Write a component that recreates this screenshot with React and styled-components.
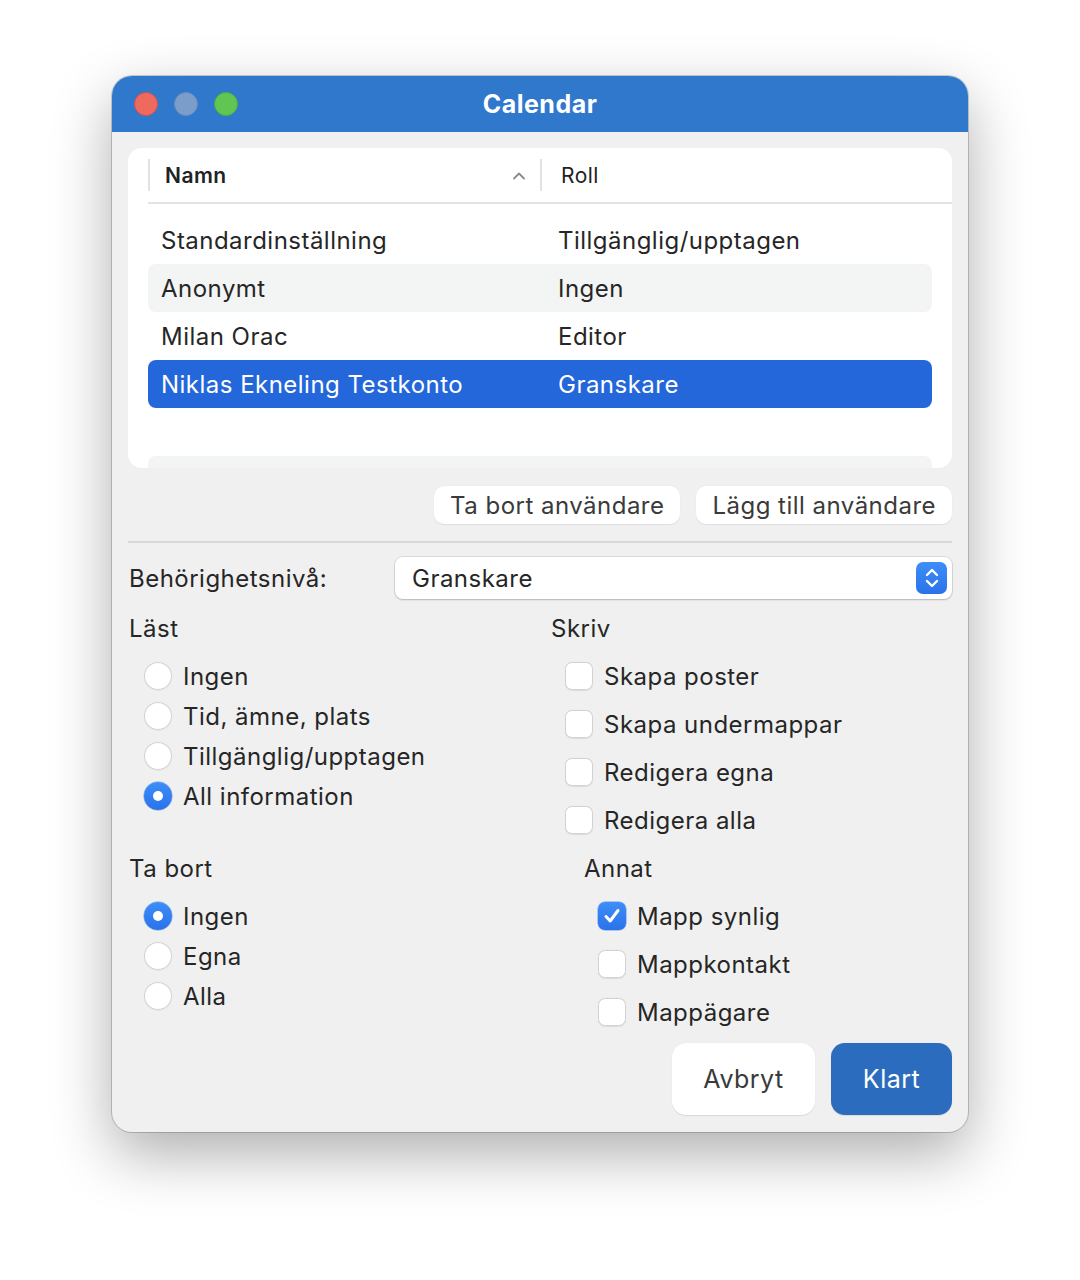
import React from 'react';
import styled, { createGlobalStyle } from 'styled-components';

const GlobalStyle = createGlobalStyle`
    html, body {
        margin: 0;
        padding: 0;
        background: #ffffff;
    }
    body {
        font-family: 'Inter', 'Liberation Sans', sans-serif;
        color: #262626;
        letter-spacing: 0.03em;
        -webkit-font-smoothing: antialiased;
    }
    button {
        letter-spacing: inherit;
    }
`;

const Page = styled.div`
    width: 1080px;
    height: 1280px;
    display: flex;
    justify-content: center;
    padding-top: 76px;
    box-sizing: border-box;
`;

const Window = styled.div`
    width: 856px;
    height: 1056px;
    background: #f0f0f0;
    border-radius: 20px;
    overflow: hidden;
    display: flex;
    flex-direction: column;
    box-shadow: 0 0 0 1px rgba(0, 0, 0, 0.18), 0 22px 60px rgba(0, 0, 0, 0.32);
`;

const TitleBar = styled.div`
    height: 56px;
    flex-shrink: 0;
    background: #2f78cc;
    display: grid;
    grid-template-columns: 1fr auto 1fr;
    align-items: center;
    padding: 0 22px;
`;

const Lights = styled.div`
    display: flex;
    gap: 16px;
`;

const Light = styled.span`
    width: 24px;
    height: 24px;
    border-radius: 50%;
    box-sizing: border-box;
    background: ${({ color }) => color};
    border: 1px solid ${({ edge }) => edge};
`;

const Title = styled.div`
    color: #ffffff;
    font-size: 25px;
    font-weight: 700;
    letter-spacing: 0.5px;
`;

const Body = styled.div`
    flex: 1;
    padding: 16px;
    display: flex;
    flex-direction: column;
`;

const TableCard = styled.div`
    height: 320px;
    background: #ffffff;
    border-radius: 14px;
    overflow: hidden;
    flex-shrink: 0;
`;

const HeaderRow = styled.div`
    height: 54px;
    border-bottom: 2px solid #e3e3e3;
    display: grid;
    grid-template-columns: 392px 1fr;
    margin-left: 20px;
    align-items: center;
`;

const HeaderCell = styled.div`
    height: 32px;
    border-left: 2px solid #e2e2e2;
    display: flex;
    align-items: center;
    justify-content: space-between;
    padding-left: ${({ pad }) => pad}px;
    padding-right: 14px;
    font-size: 21px;
    font-weight: ${({ bold }) => (bold ? 600 : 400)};
    color: #222222;
`;

const Rows = styled.div`
    padding: 12px 20px 0 20px;
    display: flex;
    flex-direction: column;
`;

const Row = styled.div`
    height: 48px;
    flex-shrink: 0;
    display: grid;
    grid-template-columns: 397px 1fr;
    align-items: center;
    padding-left: 13px;
    border-radius: 8px;
    font-size: 24px;
    background: ${({ selected, striped }) =>
        selected ? '#2367da' : striped ? '#f3f4f4' : 'transparent'};
    color: ${({ selected }) => (selected ? '#ffffff' : '#262626')};
`;

const ActionRow = styled.div`
    display: flex;
    justify-content: flex-end;
    gap: 16px;
    margin-top: 18px;
`;

const PillButton = styled.button`
    height: 38px;
    padding: 0 16px;
    border: none;
    border-radius: 10px;
    background: #ffffff;
    font-family: inherit;
    font-size: 24px;
    color: #3a3a3a;
    box-shadow: 0 0.5px 1px rgba(0, 0, 0, 0.08);
`;

const Divider = styled.div`
    height: 2px;
    background: #d8d8d8;
    margin-top: 17px;
`;

const LevelRow = styled.div`
    display: grid;
    grid-template-columns: 267px 1fr;
    align-items: center;
    margin-top: 14px;
`;

const Label = styled.div`
    font-size: 24px;
    padding-left: 1px;
`;

const Select = styled.div`
    height: 42px;
    box-sizing: border-box;
    background: #ffffff;
    border-radius: 8px;
    box-shadow: 0 0 0 1px rgba(0, 0, 0, 0.08), 0 1px 2px rgba(0, 0, 0, 0.18);
    display: flex;
    align-items: center;
    justify-content: space-between;
    padding: 0 5px 0 17px;
    font-size: 24px;
`;

const Stepper = styled.div`
    width: 31px;
    height: 32px;
    border-radius: 7px;
    background: linear-gradient(#3d8ef8, #2a72ea);
    display: flex;
    align-items: center;
    justify-content: center;
`;

const Sections = styled.div`
    display: grid;
    grid-template-columns: 422px 1fr;
    margin-top: 5px;
`;

const Section = styled.div`
    display: flex;
    flex-direction: column;
    padding-left: ${({ indent }) => indent || 0}px;
`;

const Heading = styled.div`
    height: 48px;
    display: flex;
    align-items: center;
    font-size: 24px;
    padding-left: 1px;
`;

const OptionList = styled.div`
    display: flex;
    flex-direction: column;
    padding-top: ${({ top }) => top || 0}px;
    padding-left: ${({ indent }) => indent}px;
`;

const Option = styled.div`
    height: ${({ h }) => h}px;
    display: flex;
    align-items: center;
    gap: 11px;
    font-size: 24px;
    color: #262626;
`;

const Radio = styled.span`
    width: 28px;
    height: 28px;
    border-radius: 50%;
    box-sizing: border-box;
    flex-shrink: 0;
    display: flex;
    align-items: center;
    justify-content: center;
    background: ${({ checked }) => (checked ? 'linear-gradient(#3d8ef8, #2a72ea)' : '#ffffff')};
    box-shadow: ${({ checked }) =>
        checked ? '0 0 0 0.5px rgba(30, 100, 220, 0.6)' : 'inset 0 0 0 1px #d2d2d2, 0 0.5px 1px rgba(0,0,0,0.08)'};
    &::after {
        content: '';
        display: ${({ checked }) => (checked ? 'block' : 'none')};
        width: 10px;
        height: 10px;
        border-radius: 50%;
        background: #ffffff;
    }
`;

const Box = styled.span`
    width: 28px;
    height: 28px;
    border-radius: 7px;
    box-sizing: border-box;
    flex-shrink: 0;
    display: flex;
    align-items: center;
    justify-content: center;
    background: ${({ checked }) => (checked ? 'linear-gradient(#3d8ef8, #2a72ea)' : '#ffffff')};
    box-shadow: ${({ checked }) =>
        checked ? '0 0 0 0.5px rgba(30, 100, 220, 0.6)' : 'inset 0 0 0 1px #d2d2d2, 0 0.5px 1px rgba(0,0,0,0.08)'};
`;

const Footer = styled.div`
    display: flex;
    justify-content: flex-end;
    gap: 16px;
    margin-top: 7px;
`;

const DialogButton = styled.button`
    height: 72px;
    width: ${({ w }) => w}px;
    border: none;
    border-radius: 14px;
    font-family: inherit;
    font-size: 25px;
    background: ${({ primary }) => (primary ? '#2b6cbf' : '#ffffff')};
    color: ${({ primary }) => (primary ? '#ffffff' : '#3a3a3a')};
    box-shadow: 0 0.5px 1px rgba(0, 0, 0, 0.1);
`;

const users = [
    { name: 'Standardinställning', role: 'Tillgänglig/upptagen' },
    { name: 'Anonymt', role: 'Ingen' },
    { name: 'Milan Orac', role: 'Editor' },
    { name: 'Niklas Ekneling Testkonto', role: 'Granskare', selected: true },
    { name: '', role: '' },
    { name: '', role: '' },
];

const Chevron = () => (
    <svg width="14" height="9" viewBox="0 0 14 9">
        <polyline points="2,7.5 7,2.5 12,7.5" fill="none" stroke="#8a8a8a" strokeWidth="1.8" strokeLinecap="round" strokeLinejoin="round" />
    </svg>
);

const UpDown = () => (
    <svg width="18" height="24" viewBox="0 0 18 24">
        <polyline points="4,9 9,4 14,9" fill="none" stroke="#fff" strokeWidth="2.4" strokeLinecap="round" strokeLinejoin="round" />
        <polyline points="4,15 9,20 14,15" fill="none" stroke="#fff" strokeWidth="2.4" strokeLinecap="round" strokeLinejoin="round" />
    </svg>
);

const Check = () => (
    <svg width="20" height="20" viewBox="0 0 20 20">
        <polyline points="4,10.5 8.2,15 16,4.5" fill="none" stroke="#fff" strokeWidth="3" strokeLinecap="round" strokeLinejoin="round" />
    </svg>
);

const RadioOption = ({ label, checked }) => (
    <Option h={40}>
        <Radio checked={checked} />
        {label}
    </Option>
);

const CheckOption = ({ label, checked }) => (
    <Option h={48}>
        <Box checked={checked}>{checked && <Check />}</Box>
        {label}
    </Option>
);

const App = () => {
    return (
        <Page>
            <GlobalStyle />
            <Window>
                <TitleBar>
                    <Lights>
                        <Light color="#ee6a5f" edge="#d5514a" />
                        <Light color="#7a9ec9" edge="#6a8cb8" />
                        <Light color="#61c554" edge="#4fae43" />
                    </Lights>
                    <Title>Calendar</Title>
                    <div />
                </TitleBar>
                <Body>
                    <TableCard>
                        <HeaderRow>
                            <HeaderCell pad={15} bold>
                                Namn
                                <Chevron />
                            </HeaderCell>
                            <HeaderCell pad={19}>Roll</HeaderCell>
                        </HeaderRow>
                        <Rows>
                            {users.map((u, i) => (
                                <Row key={i} striped={i % 2 === 1} selected={u.selected}>
                                    <span>{u.name}</span>
                                    <span>{u.role}</span>
                                </Row>
                            ))}
                        </Rows>
                    </TableCard>
                    <ActionRow>
                        <PillButton>Ta bort användare</PillButton>
                        <PillButton>Lägg till användare</PillButton>
                    </ActionRow>
                    <Divider />
                    <LevelRow>
                        <Label>Behörighetsnivå:</Label>
                        <Select>
                            Granskare
                            <Stepper>
                                <UpDown />
                            </Stepper>
                        </Select>
                    </LevelRow>
                    <Sections>
                        <Section>
                            <Heading>Läst</Heading>
                            <OptionList indent={16} top={4}>
                                <RadioOption label="Ingen" />
                                <RadioOption label="Tid, ämne, plats" />
                                <RadioOption label="Tillgänglig/upptagen" />
                                <RadioOption label="All information" checked />
                            </OptionList>
                        </Section>
                        <Section>
                            <Heading>Skriv</Heading>
                            <OptionList indent={15}>
                                <CheckOption label="Skapa poster" />
                                <CheckOption label="Skapa undermappar" />
                                <CheckOption label="Redigera egna" />
                                <CheckOption label="Redigera alla" />
                            </OptionList>
                        </Section>
                        <Section>
                            <Heading>Ta bort</Heading>
                            <OptionList indent={16} top={4}>
                                <RadioOption label="Ingen" checked />
                                <RadioOption label="Egna" />
                                <RadioOption label="Alla" />
                            </OptionList>
                        </Section>
                        <Section indent={33}>
                            <Heading>Annat</Heading>
                            <OptionList indent={15}>
                                <CheckOption label="Mapp synlig" checked />
                                <CheckOption label="Mappkontakt" />
                                <CheckOption label="Mappägare" />
                            </OptionList>
                        </Section>
                    </Sections>
                    <Footer>
                        <DialogButton w={143}>Avbryt</DialogButton>
                        <DialogButton w={121} primary>Klart</DialogButton>
                    </Footer>
                </Body>
            </Window>
        </Page>
    );
};

export default App;
